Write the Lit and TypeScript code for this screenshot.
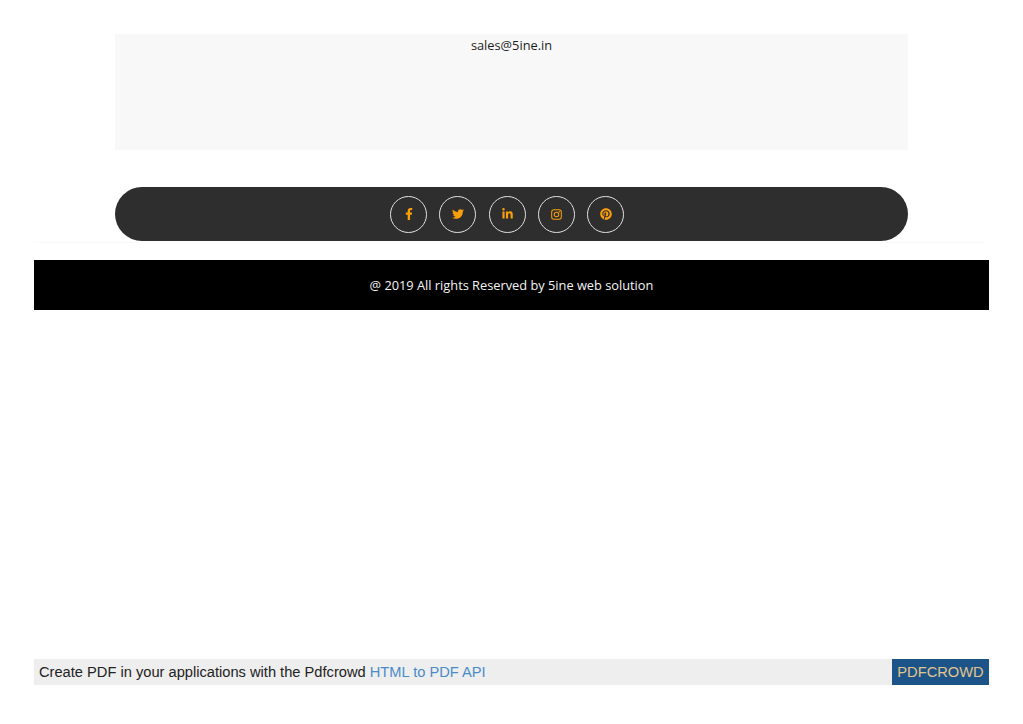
import { LitElement, html, css, svg } from "lit";
import { customElement } from "lit/decorators.js";

const icons = [
  { w: 10, h: 12, vb: "0 0 320 512", body: svg`<path d="M279.14 288l14.22-92.66h-88.91v-60.13c0-25.35 12.42-50.06 52.24-50.06h40.42V6.26S260.43 0 225.36 0c-73.22 0-121.08 44.38-121.08 124.72v70.62H22.89V288h81.39v224h100.17V288z"/>` },
  { w: 12, h: 12, vb: "0 0 512 512", body: svg`<path d="M459.37 151.716c.325 4.548.325 9.097.325 13.645 0 138.72-105.583 298.558-298.558 298.558-59.452 0-114.68-17.219-161.137-47.106 8.447.974 16.568 1.299 25.34 1.299 49.055 0 94.213-16.568 130.274-44.832-46.132-.975-84.792-31.188-98.112-72.772 6.498.974 12.995 1.624 19.818 1.624 9.421 0 18.843-1.3 27.614-3.573-48.081-9.747-84.143-51.98-84.143-102.985v-1.299c13.969 7.797 30.214 12.67 47.431 13.319-28.264-18.843-46.781-51.005-46.781-87.391 0-19.492 5.197-37.36 14.294-52.954 51.655 63.675 129.3 105.258 216.365 109.807-1.624-7.797-2.599-15.918-2.599-24.04 0-57.828 46.782-104.934 104.934-104.934 30.213 0 57.502 12.67 76.67 33.137 23.715-4.548 46.456-13.32 66.599-25.34-7.798 24.366-24.366 44.833-46.132 57.827 21.117-2.273 41.584-8.122 60.426-16.243-14.292 20.791-32.161 39.308-52.628 54.253z"/>` },
  { w: 11, h: 12, vb: "0 0 448 512", body: svg`<path d="M100.28 448H7.4V148.9h92.88zM53.79 108.1C24.09 108.1 0 83.5 0 53.8a53.79 53.79 0 0 1 107.58 0c0 29.7-24.1 54.3-53.79 54.3zM447.9 448h-92.68V302.4c0-34.7-.7-79.2-48.29-79.2-48.29 0-55.69 37.7-55.69 76.7V448h-92.78V148.9h89.08v40.8h1.3c12.4-23.5 42.69-48.3 87.88-48.3 94 0 111.28 61.9 111.28 142.3V448z"/>` },
  { w: 11, h: 11, vb: "0 0 24 24", body: svg`<rect x="1.5" y="1.5" width="21" height="21" rx="5" fill="none" stroke="#fa9f0c" stroke-width="2.2"/><circle cx="12" cy="12" r="5" fill="none" stroke="#fa9f0c" stroke-width="2.2"/><circle cx="18" cy="6" r="1.4"/>` },
  { w: 12, h: 12, vb: "0 0 496 512", body: svg`<path d="M496 256c0 137-111 248-248 248-25.6 0-50.2-3.9-73.4-11.1 10.1-16.5 25.2-43.5 30.8-65 3-11.6 15.4-59 15.4-59 8.1 15.4 31.7 28.5 56.8 28.5 74.8 0 128.7-68.8 128.7-154.3 0-81.9-66.9-143.2-152.9-143.2-107 0-163.9 71.8-163.9 150.1 0 36.4 19.4 81.7 50.3 96.1 4.7 2.2 7.2 1.2 8.3-3.3.8-3.4 5-20.3 6.9-28.1.6-2.5.3-4.7-1.7-7.1-10.1-12.5-18.3-35.3-18.3-56.6 0-54.7 41.4-107.6 112-107.6 60.9 0 103.6 41.5 103.6 100.9 0 67.1-33.9 113.6-78 113.6-24.3 0-42.6-20.1-36.7-44.8 7-29.5 20.5-61.3 20.5-82.6 0-19-10.2-34.9-31.4-34.9-24.9 0-44.9 25.7-44.9 60.2 0 22 7.4 36.8 7.4 36.8s-24.5 103.8-29 123.2c-5 21.4-3 51.6-.9 71.2C65.4 450.9 0 361.1 0 256 0 119 111 8 248 8s248 111 248 248z"/>` },
];

@customElement("app-root")
export class AppRoot extends LitElement {
  static styles = css`
    :host {
      display: block;
      height: 724px;
      background: #fff;
      font-family: "Open Sans", sans-serif;
    }
    .page {
      box-sizing: border-box;
      height: 724px;
      padding: 34px 34px 0;
      display: flex;
      flex-direction: column;
    }
    .inner {
      margin: 0 81px;
    }
    .contact {
      height: 116px;
      background: #f8f8f8;
      text-align: center;
      font-size: 12.8px;
      line-height: 23px;
      color: #1c1c1c;
    }
    .social {
      box-sizing: border-box;
      margin-top: 37px;
      height: 54px;
      padding-right: 9px;
      border-radius: 27px;
      background: #2e2e2e;
      display: flex;
      justify-content: center;
      align-items: center;
      gap: 12.25px;
    }
    .circle {
      box-sizing: border-box;
      width: 37px;
      height: 37px;
      border: 1px solid #e0e0e0;
      border-radius: 50%;
      display: flex;
      align-items: center;
      justify-content: center;
    }
    .circle svg {
      fill: #fa9f0c;
      display: block;
    }
    .rule {
      margin: 1px 5px 0 0;
      height: 1px;
      background: #f9f9f9;
    }
    .copy {
      margin-top: 17px;
      height: 50px;
      background: #000;
      color: #f4f4f4;
      font-size: 12.8px;
      display: flex;
      align-items: center;
      justify-content: center;
    }
    .bar {
      margin-top: auto;
      margin-bottom: 39px;
      height: 26px;
      display: flex;
      font-family: "Liberation Sans", sans-serif;
      font-size: 14.67px;
    }
    .msg {
      flex: 1;
      background: #eee;
      color: #222;
      padding-left: 5px;
      line-height: 26px;
    }
    .msg span {
      color: #4a8bc9;
    }
    .brand {
      width: 97px;
      background: #1d5488;
      color: #e2c58f;
      text-align: center;
      line-height: 26px;
    }
  `;

  render() {
    return html`
      <div class="page">
        <div class="inner contact">sales@5ine.in</div>
        <div class="inner social">
          ${icons.map(
            (i) => html`<div class="circle">
              <svg width=${i.w} height=${i.h} viewBox=${i.vb}>${i.body}</svg>
            </div>`
          )}
        </div>
        <div class="rule"></div>
        <div class="copy">@ 2019 All rights Reserved by 5ine web solution</div>
        <div class="bar">
          <div class="msg">Create PDF in your applications with the Pdfcrowd <span>HTML to PDF API</span></div>
          <div class="brand">PDFCROWD</div>
        </div>
      </div>
    `;
  }
}
